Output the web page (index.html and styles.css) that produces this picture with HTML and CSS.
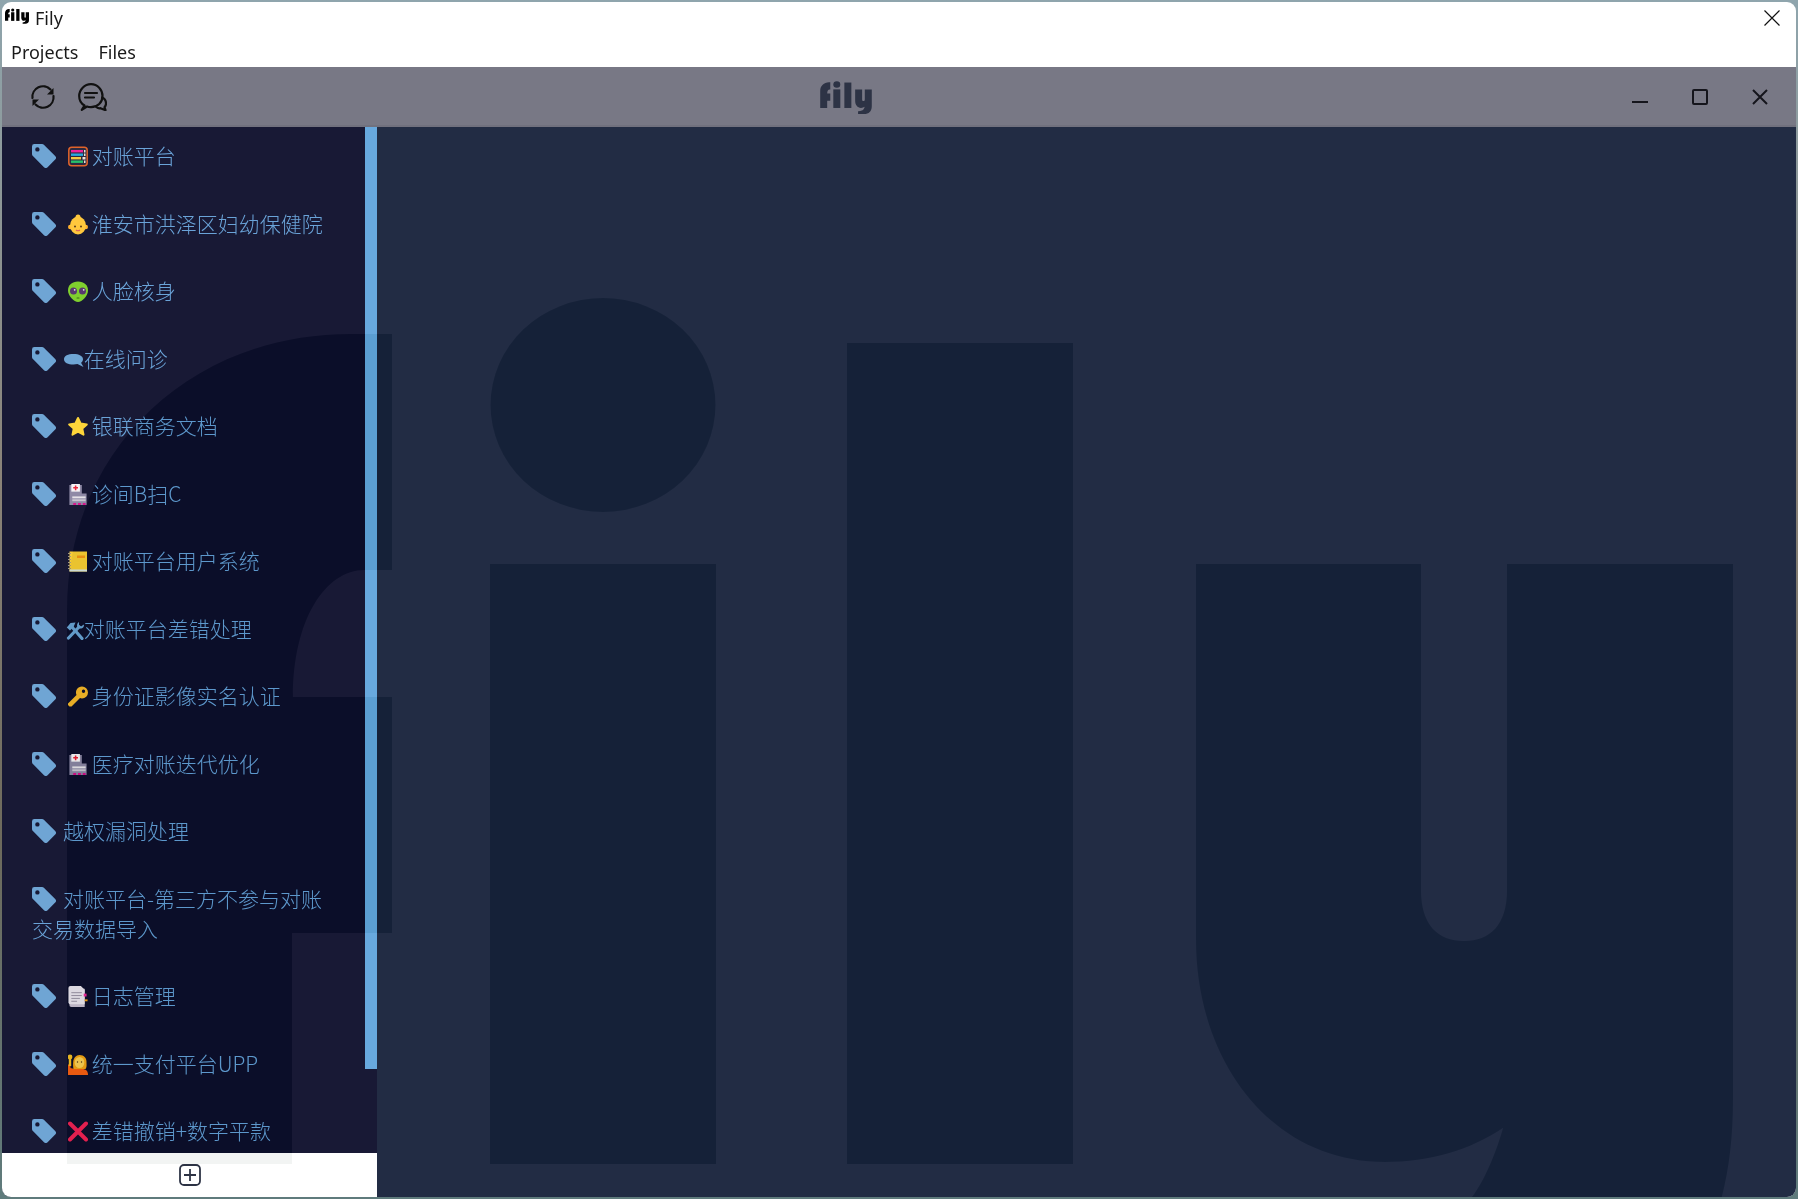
FILE: index.html
```html
<!DOCTYPE html>
<html lang="en">
<head>
  <meta charset="UTF-8" />
  <title>Fily</title>
  <link rel="stylesheet" href="styles.css">
</head>
<body>

  <!-- shared icons -->
  <svg class="sprite" xmlns="http://www.w3.org/2000/svg">
    <symbol id="logo" viewBox="67 293 1666 1066">
      <path d="M392 334H350C190 334 67 450 67 610V1164H292V933H392V697H293C293 620 325 570 365 570H392Z"/>
      <ellipse cx="603" cy="405" rx="112.5" ry="107"/>
      <rect x="490" y="564" width="226" height="600"/>
      <rect x="847" y="343" width="226" height="821"/>
      <path d="M1196 564H1421V890C1421 925 1438 941 1464 941C1490 941 1507 925 1507 890V564H1733V1100C1733 1280 1640 1359 1480 1359H1290V1270C1400 1265 1450 1240 1472 1197C1485 1180 1497 1150 1503 1128C1470 1150 1430 1162 1385 1162C1270 1162 1196 1060 1196 940Z"/>
    </symbol>
    <symbol id="tag" viewBox="0 0 24 24">
      <path fill-rule="evenodd" d="M0 2.4A2.4 2.4 0 0 1 2.4 0H10a3 3 0 0 1 2.1.9L23.2 12a2.6 2.6 0 0 1 0 3.6L15.6 23.2a2.6 2.6 0 0 1-3.6 0L.9 12.1A3 3 0 0 1 0 10ZM5.4 3.2a2.2 2.2 0 1 0 0 4.4a2.2 2.2 0 1 0 0-4.4Z"/>
    </symbol>
    <symbol id="hospital" viewBox="0 0 20 22">
      <path fill="#8f8aa6" d="M1 1H14V10H19V22H1Z"/>
      <rect x="3" y="0" width="9" height="8" fill="#f5f2f5"/>
      <path fill="#e8283c" d="M6.700 1.500H8.300V3.200H10V4.800H8.300V6.500H6.700V4.800H5V3.200H6.700Z"/>
      <rect x="4" y="13" width="14" height="2" fill="#e6e2e8"/>
      <rect x="4" y="16" width="14" height="2" fill="#c9c5d0"/>
      <path fill="#d6188c" d="M5 20H8V22H5ZM10 20H13V22H10ZM15 20H18V22H15Z"/>
    </symbol>
  </svg>

  <div class="window">

    <header class="titlebar">
      <svg class="title-logo"><use href="#logo"/></svg>
      <span class="title-text">Fily</span>
      <svg class="title-close" viewBox="0 0 16 16"><path d="M.5.500 15.500 15.500M15.500.500 .5 15.500"/></svg>
    </header>

    <nav class="menubar">
      <span>Projects</span>
      <span>Files</span>
    </nav>

    <div class="toolbar">
      <div class="tool-left">
        <svg class="ico-refresh" viewBox="0 0 26 26">
          <path class="line" d="M2.500 14A10.500 10.500 0 0 1 20.500 5.500"/>
          <path class="solid" d="M23.500 4V10.500H17Z"/>
          <path class="line" d="M23.500 12A10.500 10.500 0 0 1 5.500 20.500"/>
          <path class="solid" d="M2.500 22V15.500H9Z"/>
        </svg>
        <svg class="ico-chat" viewBox="0 0 29 28">
          <path class="line" d="M6.500 22.500C3 20.500 1.200 17 1.200 13C1.200 6.500 6.500 1.200 13 1.200S24.500 6.500 24.500 13S19.500 24.200 13 24.200C11.500 24.200 10 24 9 23.500L3.800 26.800Z"/>
          <path class="line" d="M7 10H19M7 14.500H16"/>
          <path class="line" d="M24.200 14.500C26.500 15.500 28 18 28 20.500C28 22 27.300 23.300 26.500 24.200L27.500 27.200L22.500 25.200C21 25.500 19.500 25 18.200 24"/>
        </svg>
      </div>
      <svg class="tool-logo"><use href="#logo"/></svg>
      <div class="tool-right">
        <svg class="win-btn" viewBox="0 0 16 16"><path d="M0 13H16"/></svg>
        <svg class="win-btn" viewBox="0 0 16 16"><rect x="1" y="1" width="14" height="14" rx="1"/></svg>
        <svg class="win-btn" viewBox="0 0 16 16"><path d="M1 1 15 15M15 1 1 15"/></svg>
      </div>
    </div>

    <div class="content">
      <aside class="sidebar">
        <div class="project-list">
          <div class="project">
            <svg class="tag"><use href="#tag"/></svg>
            <svg class="emoji" viewBox="0 0 20 20">
              <rect x=".8" y=".8" width="18.400" height="18.400" rx="3" fill="#2c2a40" stroke="#e0632a" stroke-width="1.500"/>
              <rect x="3" y="3.500" width="12" height="2.400" fill="#f0219a"/>
              <rect x="3" y="7" width="12" height="2.400" fill="#2aa8e0"/>
              <rect x="3" y="10.500" width="10" height="2.400" fill="#f5c842"/>
              <rect x="3" y="14" width="12" height="2.400" fill="#27c06a"/>
              <path d="M16 3.500h1.500v2.400H16ZM16 7h1.500v2.400H16ZM14.500 10.500h3v2.400h-3ZM16 14h1.500v2.400H16Z" fill="#e9e3da"/>
            </svg>对账平台
          </div>
          <div class="project">
            <svg class="tag"><use href="#tag"/></svg>
            <svg class="emoji" viewBox="0 0 20 20">
              <circle cx="2.200" cy="12.500" r="2.200" fill="#ffb02e"/>
              <circle cx="17.800" cy="12.500" r="2.200" fill="#ffb02e"/>
              <circle cx="10" cy="2.500" r="2.500" fill="#ffc83d"/>
              <ellipse cx="10" cy="11" rx="8" ry="9" fill="#ffc83d"/>
              <circle cx="7" cy="12" r="1" fill="#5a3b1e"/>
              <circle cx="13" cy="12" r="1" fill="#5a3b1e"/>
              <path d="M8 15.500Q10 17 12 15.500" fill="none" stroke="#d9605a" stroke-width="1.200"/>
            </svg>淮安市洪泽区妇幼保健院
          </div>
          <div class="project">
            <svg class="tag"><use href="#tag"/></svg>
            <svg class="emoji" viewBox="0 0 20 20">
              <path fill="#7fd02e" d="M10 0C16 0 20 3.500 20 9C20 14.500 14 20.500 10 20.500S0 14.500 0 9C0 3.500 4 0 10 0Z"/>
              <circle cx="5.500" cy="9.500" r="3.500" fill="#57396f"/>
              <circle cx="14.500" cy="9.500" r="3.500" fill="#57396f"/>
              <circle cx="6.700" cy="8.300" r=".9" fill="#e8e0f0"/>
              <circle cx="15.700" cy="8.300" r=".9" fill="#e8e0f0"/>
              <rect x="8.500" y="16" width="3" height="1" rx=".5" fill="#3f6a18"/>
            </svg>人脸核身
          </div>
          <div class="project">
            <svg class="tag"><use href="#tag"/></svg>
            <svg class="glyph glyph-chat" viewBox="0 0 20 14">
              <path d="M9.500 0C15 0 19 2 19 5.200C19 6.800 18.200 8 17 8.800L19.500 13L13.500 10.100C12.200 10.300 11 10.500 9.500 10.500C4 10.500 0 8.500 0 5.200S4 0 9.500 0Z"/>
            </svg>在线问诊
          </div>
          <div class="project">
            <svg class="tag"><use href="#tag"/></svg>
            <svg class="emoji" viewBox="0 0 20 20">
              <path fill="#fdd53a" stroke="#fdd53a" stroke-width="2" stroke-linejoin="round" d="M10 1.500 12.700 7.100 18.800 7.900 14.300 12.100 15.500 18.200 10 15.200 4.500 18.200 5.700 12.100 1.200 7.900 7.300 7.100Z"/>
            </svg>银联商务文档
          </div>
          <div class="project">
            <svg class="tag"><use href="#tag"/></svg>
            <svg class="emoji"><use href="#hospital"/></svg>诊间B扫C
          </div>
          <div class="project">
            <svg class="tag"><use href="#tag"/></svg>
            <svg class="emoji" viewBox="0 0 20 20">
              <rect x="1.500" y="0" width="17.500" height="20" fill="#f7ce3c"/>
              <rect x="1.500" y="18" width="17.500" height="2" fill="#d8e4e0"/>
              <rect x="9" y="4" width="8" height="2.500" fill="#f29a1f"/>
              <path d="M0 2h3M0 5h3M0 8h3M0 11h3M0 14h3M0 17h3" stroke="#a89a7c" stroke-width="1.200"/>
            </svg>对账平台用户系统
          </div>
          <div class="project">
            <svg class="tag"><use href="#tag"/></svg>
            <svg class="glyph glyph-tools" viewBox="0 0 18 18">
              <path class="tool-stroke" d="M6 5 16 16.500"/>
              <path d="M.8 5.500 4.500 1 9.500.5 7.500 5 4 8.500Z"/>
              <path class="tool-stroke" d="M13 5 2.500 16"/>
              <path d="M13 0C11 1 10.500 3.500 11.500 5.500C13 7 16 7 17.500 5C18 4 18 3 17.800 2.500L15 4.500 13 3Z"/>
            </svg>对账平台差错处理
          </div>
          <div class="project">
            <svg class="tag"><use href="#tag"/></svg>
            <svg class="emoji" viewBox="0 0 20 20">
              <path fill="#f4b832" fill-rule="evenodd" d="M14 0A6 6 0 0 1 14 12C13.300 12 12.600 11.900 12 11.600L3.500 20H1.500L0 18.500V17L8.500 8.500A6 6 0 0 1 14 0ZM15.500 3A1.700 1.700 0 1 0 15.500 6.400A1.700 1.700 0 1 0 15.500 3Z"/>
            </svg>身份证影像实名认证
          </div>
          <div class="project">
            <svg class="tag"><use href="#tag"/></svg>
            <svg class="emoji"><use href="#hospital"/></svg>医疗对账迭代优化
          </div>
          <div class="project">
            <svg class="tag"><use href="#tag"/></svg>越权漏洞处理
          </div>
          <div class="project">
            <svg class="tag"><use href="#tag"/></svg>对账平台-第三方不参与对账交易数据导入
          </div>
          <div class="project">
            <svg class="tag"><use href="#tag"/></svg>
            <svg class="emoji" viewBox="0 0 20 22">
              <path fill="#c9bfd0" d="M1 3H17V22H3Q1 22 1 20Z"/>
              <path fill="#e9e3ec" d="M0 2Q0 0 2 0H13L17 4V19H2Q0 19 0 17Z"/>
              <path d="M3 7H14M3 10H14M3 13H12M3 16H9" stroke="#9a92a4" stroke-width="1"/>
              <rect x="16" y="8" width="3" height="3" fill="#ef2f9c"/>
              <rect x="17" y="14" width="3" height="2" fill="#f2a31f"/>
            </svg>日志管理
          </div>
          <div class="project">
            <svg class="tag"><use href="#tag"/></svg>
            <svg class="emoji" viewBox="0 0 20 21">
              <path fill="#f5641c" d="M0 21V11C0 10 2.500 10 2.500 11V14L7 15H14C18 15 20 17 20 21Z"/>
              <circle cx="2" cy="3" r="2.400" fill="#f2c02e"/>
              <rect x=".8" y="4" width="2.400" height="8" fill="#f2c02e"/>
              <path fill="#f0a51e" d="M11.500 1C16 1 19 4 18.500 9C18.500 11 19 13 17.500 15H5.500C5 12 5 10 5.200 8C5.500 4 8 1 11.500 1Z"/>
              <ellipse cx="11.500" cy="8.500" rx="4.800" ry="5.500" fill="#f9cf5a"/>
              <circle cx="9.500" cy="8" r=".7" fill="#5a3b1e"/>
              <circle cx="13.500" cy="8" r=".7" fill="#5a3b1e"/>
            </svg>统一支付平台UPP
          </div>
          <div class="project">
            <svg class="tag"><use href="#tag"/></svg>
            <svg class="emoji" viewBox="0 0 20 20">
              <path d="M2 2 18 18M18 2 2 18" stroke="#ef2b5b" stroke-width="4" stroke-linecap="round"/>
            </svg>差错撤销+数字平款
          </div>
          <div class="scroll-thumb"></div>
        </div>
        <footer class="side-foot">
          <svg class="ico-add" viewBox="0 0 22 22">
            <rect x="1" y="1" width="20" height="20" rx="4"/>
            <path d="M11 5V17M5 11H17"/>
          </svg>
        </footer>
      </aside>
      <main class="main-pane"></main>
    </div>

    <!-- big logo washed over the whole window -->
    <svg class="watermark"><use href="#logo"/></svg>
  </div>

</body>
</html>
```

FILE: styles.css
```css
* {
  box-sizing: border-box;
}

body {
  margin: 0;
  padding: 2px;
  height: 100vh;
  overflow: hidden;
  font-family: "Noto Sans", "Open Sans", sans-serif;
  background: linear-gradient(to bottom, #8fa5ad 0%, #8a8378 40%, #6d6a5c 70%, #5f7b7c 100%);
}

.sprite {
  display: none;
}

.window {
  position: relative;
  display: flex;
  flex-direction: column;
  width: 1794px;
  height: 1195px;
  background: #fff;
  border-radius: 9px;
  overflow: hidden;
}

/* native title + menu */
.titlebar {
  display: flex;
  align-items: center;
  height: 32px;
  flex-shrink: 0;
  padding: 0 16px 0 3px;
  color: #1a1a1a;
  font-size: 18px;
}

.title-logo {
  width: 24px;
  height: 16px;
  margin-top: -5px;
  fill: #000;
}

.title-text {
  margin-left: 6px;
}

.title-close {
  width: 16px;
  height: 16px;
  margin-left: auto;
  fill: none;
  stroke: #111;
  stroke-width: 1.2;
}

.menubar {
  display: flex;
  align-items: center;
  gap: 20px;
  height: 33px;
  flex-shrink: 0;
  padding: 2px 0 0 9px;
  color: #1a1a1a;
  font-size: 18px;
}

/* app toolbar */
.toolbar {
  display: flex;
  align-items: center;
  height: 60px;
  flex-shrink: 0;
  padding: 2px 28px 0 28px;
  background: #787885;
  border-bottom: 2px solid #71717e;
}

.tool-left {
  display: flex;
  align-items: center;
  gap: 22px;
  width: 78px;
}

.ico-refresh {
  width: 26px;
  height: 26px;
  flex-shrink: 0;
}

.ico-chat {
  width: 29px;
  height: 28px;
  flex-shrink: 0;
}

.line {
  fill: none;
  stroke: #111;
  stroke-width: 2.200;
  stroke-linejoin: round;
  stroke-linecap: round;
}

.solid {
  fill: #111;
}

.tool-logo {
  width: 52px;
  height: 33px;
  margin-left: 712px;
  fill: #2d3345;
}

.tool-right {
  display: flex;
  align-items: center;
  gap: 44px;
  margin-left: auto;
}

.win-btn {
  width: 16px;
  height: 16px;
  fill: none;
  stroke: #15151c;
  stroke-width: 2;
}

/* body */
.content {
  display: flex;
  flex: 1;
  min-height: 0;
}

.sidebar {
  display: flex;
  flex-direction: column;
  width: 375px;
  flex-shrink: 0;
  background: #181935;
}

.project-list {
  position: relative;
  flex: 1;
  min-height: 0;
  padding-right: 28px;
  overflow: hidden;
}

.project {
  padding: 13px 10px 24.500px 30px;
  color: #6aa3d8;
  font-family: "Noto Sans CJK SC", sans-serif;
  font-size: 21px;
  font-weight: 300;
  line-height: 30px;
}

.tag {
  width: 24px;
  height: 24px;
  margin-right: 7px;
  vertical-align: -4px;
  fill: #6fa5d4;
}

.emoji {
  width: 20px;
  height: 21px;
  margin: 0 4px 0 0;
  vertical-align: -3px;
}

.glyph {
  fill: #6fa5d4;
  vertical-align: -1px;
}

.glyph-chat {
  width: 20px;
  height: 14px;
  margin-left: -4px;
}

.glyph-tools {
  width: 18px;
  height: 18px;
  margin-left: -2px;
  vertical-align: -3px;
}

.tool-stroke {
  fill: none;
  stroke: #6fa5d4;
  stroke-width: 3.200;
  stroke-linecap: round;
}

.scroll-thumb {
  position: absolute;
  top: 0;
  right: 0;
  width: 12px;
  height: 942px;
  background: #68a9de;
}

.side-foot {
  display: flex;
  align-items: flex-start;
  justify-content: center;
  height: 44px;
  flex-shrink: 0;
  padding-top: 11px;
  background: #fff;
}

.ico-add {
  width: 22px;
  height: 22px;
  fill: none;
  stroke: #2d3345;
  stroke-width: 1.800;
}

.main-pane {
  flex: 1;
  background: #222c44;
}

.watermark {
  position: absolute;
  left: 65px;
  top: 291px;
  width: 1666px;
  height: 1066px;
  fill: #0d0b0c;
  mix-blend-mode: difference;
  pointer-events: none;
}
```
